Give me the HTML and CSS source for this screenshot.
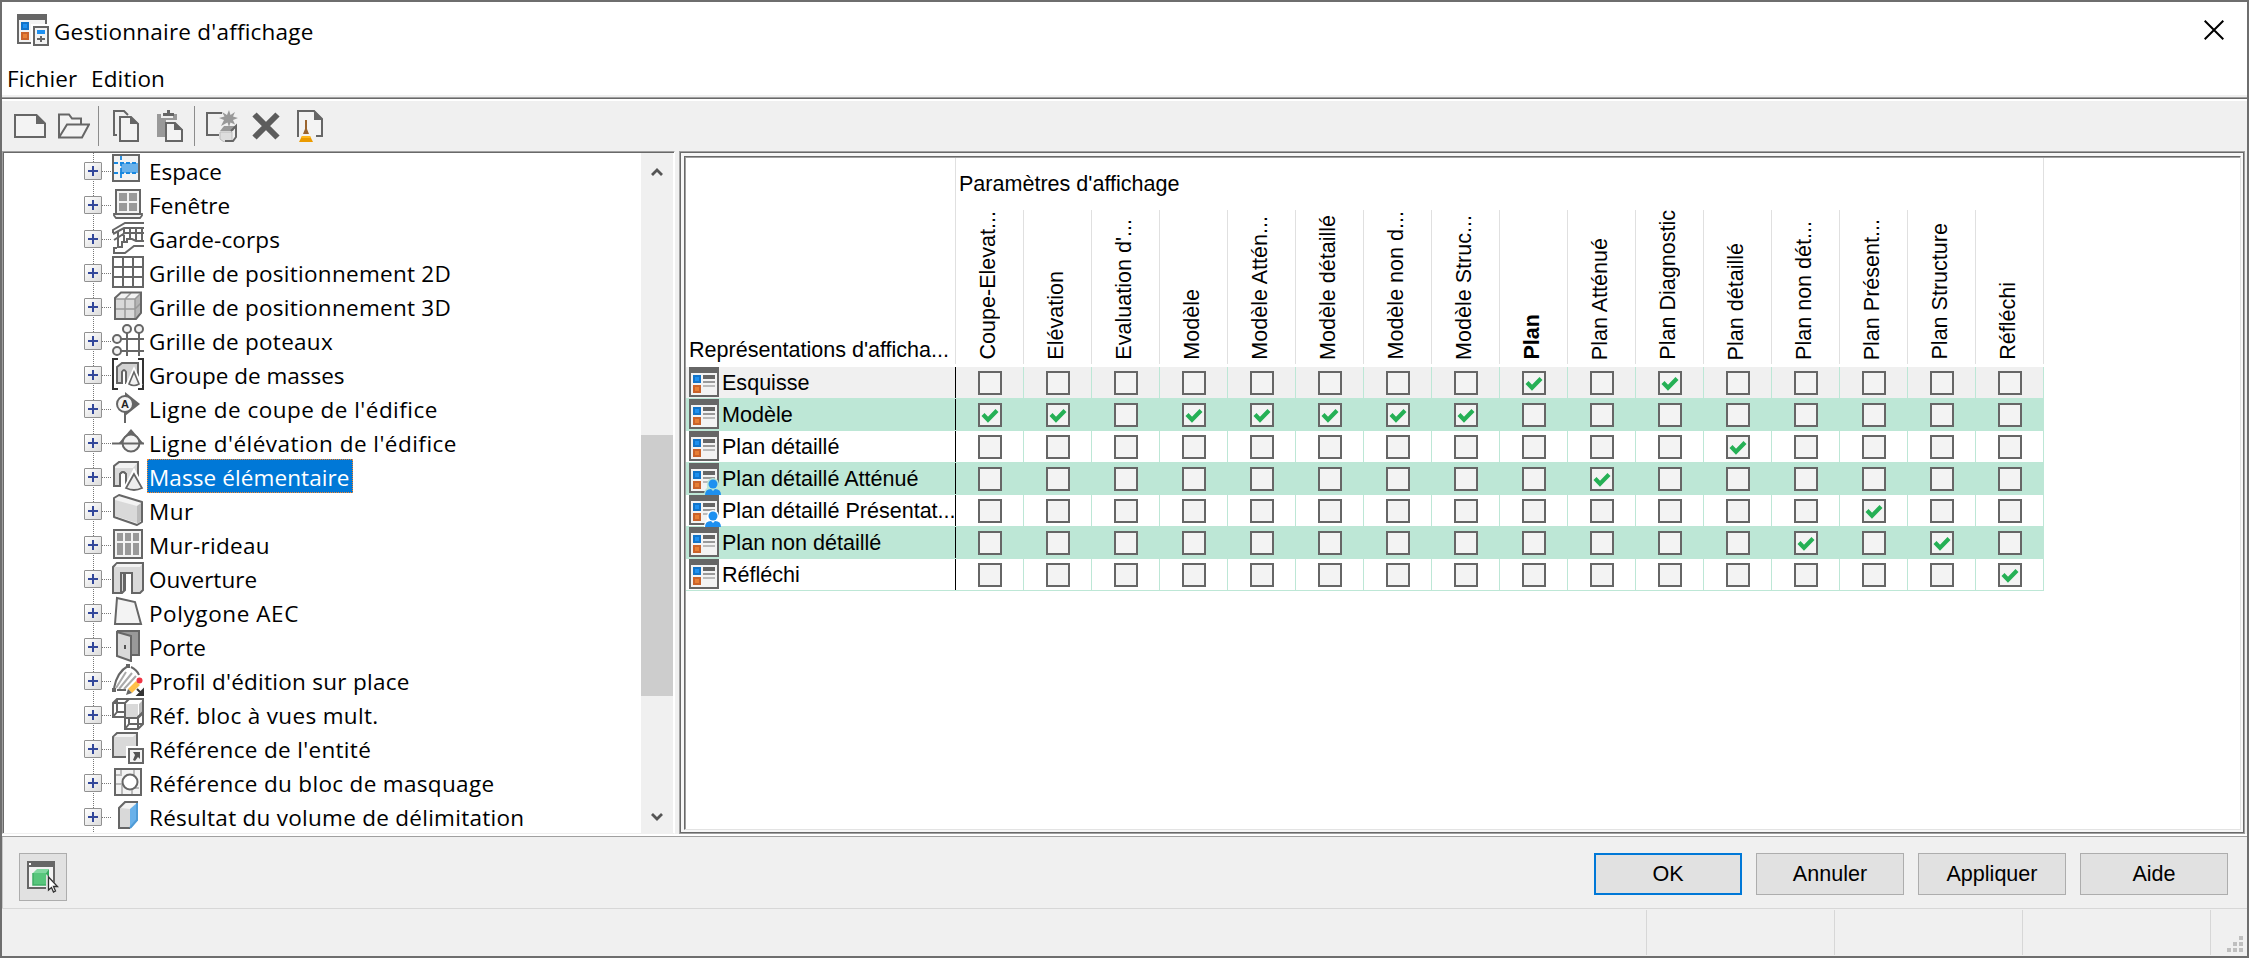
FILE: index.html
```html
<!DOCTYPE html>
<html lang="fr">
<head>
<meta charset="utf-8">
<title>Gestionnaire d'affichage</title>
<link rel="stylesheet" href="styles.css">
</head>
<body>
<div class="window">
  <header class="titlebar">
    <svg class="ico" viewBox="0 0 32 32"><rect x="1" y="1" width="28" height="28" fill="#f3f3f3" stroke="#666" stroke-width="2"/><path d="M0 0h30v6H0z" fill="#666"/><path d="M4 8h8v8H4z" fill="#1173c8"/><path d="M6 10h4v4H6z" fill="#1e90f0"/><path d="M4 18h8v8H4z" fill="#c9622a"/><path d="M6 20h4v4H6z" fill="#e87f35"/><path d="M14 10h18v22H14z" fill="#fff"/><rect x="17" y="13" width="14" height="18" fill="#f3f3f3" stroke="#666" stroke-width="2"/><path d="M20 16h8v4h-8z" fill="#1e90f0"/><path d="M20 25h8M24 22v6" stroke="#666" stroke-width="2"/></svg>
    <span class="ui title-text">Gestionnaire d'affichage</span>
    <svg class="close" viewBox="0 0 20 20"><path d="M.7.7l18.600 18.600M19.300.7L.7 19.300" stroke="#000" stroke-width="2" fill="none"/></svg>
  </header>
  <nav class="menubar ui"><span class="m1">Fichier</span><span class="m2">Edition</span></nav>
  <div class="toolbar">
    <svg class="ico" viewBox="0 0 32 32"><path d="M1 5h21.500l8.500 8.500V27H1z" fill="#f3f3f3" stroke="#666" stroke-width="2"/><path d="M22 4v10h10z" fill="#666"/></svg>
    <svg class="ico" viewBox="0 0 32 32"><path d="M1 27.500V4.500h10l3 4h9v6M1 27.500l8-13h22l-7 13z" fill="#f3f3f3" stroke="#666" stroke-width="2"/></svg>
    <i class="sep"></i>
    <svg class="ico" viewBox="0 0 32 32"><path d="M7 25H4V1h10l4 4" fill="none" stroke="#666" stroke-width="2"/><path d="M10 7h11l7 7v17H10z" fill="#f3f3f3" stroke="#666" stroke-width="2"/><path d="M20 6v8h9z" fill="#666"/></svg>
    <svg class="ico" viewBox="0 0 32 32"><path d="M3 4h4v4h12V4h4v6H12v17H3z" fill="#999"/><path d="M10 3h3V0h3v3h4v3H9V3z" fill="#666"/><path d="M12 13h9l7 7v11H12z" fill="#f3f3f3" stroke="#666" stroke-width="2"/><path d="M20 12v8h9z" fill="#666"/></svg>
    <i class="sep"></i>
    <svg class="ico" viewBox="0 0 32 32"><path d="M16 3H1v22h12" fill="none" stroke="#666" stroke-width="2"/><path d="M23 0l1.500 5L29 2l-2 4.500 5 1.500-5 2 2 4.500-4.500-2L23 17l-1.500-4.500L15 16l3-6-5-2 5.500-1.500L16 2l5 3z" fill="#999"/><path d="M14 22h12v10H18l-4-3z" fill="#ddd" stroke="#bbb"/><path d="M14 21l4-5h12l-3 5z" fill="#999"/><path d="M25 21l5-5v11l-3 4h-8" fill="none" stroke="#666" stroke-width="2"/></svg>
    <svg class="ico" viewBox="0 0 32 32"><path d="M4.500 4.500l23 23M27.500 4.500l-23 23" stroke="#5c5c5c" stroke-width="6"/></svg>
    <svg class="ico" viewBox="0 0 32 32"><path d="M4 27V1h16l8 8v17h-6" fill="#f3f3f3" stroke="#666" stroke-width="2"/><path d="M20 0v10h9z" fill="#666"/><path d="M11 10h2v9l2 5H9l2-5z" fill="#9a642e"/><path d="M8 26h8l3 6H5z" fill="#eb9b00"/><path d="M8 26h8l1 2H7z" fill="#ffb81c"/></svg>
  </div>
  <main class="main">
    <section class="tree">
      <ul class="items ui">
        <li><b class="plus"></b><svg class="ico" viewBox="0 0 32 32"><rect x="1" y="1" width="26" height="26" fill="#f3f3f3" stroke="#666" stroke-width="2"/><path d="M9 9h17v10H9z" fill="#69b1ea"/><path d="M9 2v24M2 9h24M2 19h24" fill="none" stroke="#1787e0" stroke-width="1.800" stroke-dasharray="4 2"/></svg><span>Espace</span></li>
        <li><b class="plus"></b><svg class="ico" viewBox="0 0 32 32"><rect x="4" y="2" width="24" height="24" fill="#f3f3f3" stroke="#666" stroke-width="2"/><path d="M7 5h8v8H7zM17 5h8v8h-8zM7 15h8v8H7zM17 15h8v8h-8z" fill="#999"/><path d="M2 26h28v1.500L28 30H4l-2-2.500z" fill="#f3f3f3" stroke="#666" stroke-width="1.800"/></svg><span class="w1">Fenêtre</span></li>
        <li><b class="plus"></b><svg class="ico" viewBox="0 0 32 32"><g fill="none" stroke="#666" stroke-width="2"><path d="M1 11v-3L13 1h19M1 12l11-6h20M6 10v16M12 6v14M18 6v12M24 6v12M30 6v12M2 18l11-7h19M5 26H2v5h11l9-7h10M5 25h5v-5h5v-3h5l4 2h8"/></g></svg><span class="w1">Garde-corps</span></li>
        <li><b class="plus"></b><svg class="ico" viewBox="0 0 32 32"><path d="M1 1h30v30H1zM11 1v30M21 1v30M1 11h30M1 21h30" fill="#fff" stroke="#666" stroke-width="2"/></svg><span class="w2">Grille de positionnement 2D</span></li>
        <li><b class="plus"></b><svg class="ico" viewBox="0 0 32 32"><path d="M3 9l6-6h20l-6 6z" fill="#f3f3f3"/><path d="M3 9h20v20H3z" fill="#d9d9d9"/><path d="M23 9l6-6v20l-6 6z" fill="#b5b5b5"/><path d="M3 9h20v20M13 9v20M3 19h20l6-6M13 9l6-6M23 9l6-6" fill="none" stroke="#999" stroke-width="1.500"/><path d="M3 29V8l6-5.500h20V23l-5 6z" fill="none" stroke="#666" stroke-width="2"/></svg><span class="w2">Grille de positionnement 3D</span></li>
        <li><b class="plus"></b><svg class="ico" viewBox="0 0 32 32"><g fill="none" stroke="#666" stroke-width="2"><path d="M15 9v23M27 9v23M9 15h23M9 27h23"/><g fill="#f3f3f3"><circle cx="15" cy="5" r="4"/><circle cx="27" cy="5" r="4"/><circle cx="5" cy="15" r="4"/><circle cx="5" cy="27" r="4"/></g></g></svg><span class="w2">Grille de poteaux</span></li>
        <li><b class="plus"></b><svg class="ico" viewBox="0 0 32 32"><path d="M6 1H1v30h5M26 1h5v30h-5" fill="none" stroke="#333" stroke-width="2"/><path d="M5 25V9l5-4h16v13l-8 7h-4V14q-2-4-4 0v11z" fill="#d2d2d2" stroke="#666" stroke-width="2"/><path d="M22 13l-6 13q6 4 12 0z" fill="#f3f3f3" stroke="#fff" stroke-width="4"/><path d="M22 14l-5 12q5 3 10 0z" fill="#f3f3f3" stroke="#666" stroke-width="1.600"/></svg><span>Groupe de masses</span></li>
        <li><b class="plus"></b><svg class="ico" viewBox="0 0 32 32"><path d="M13 0l15 12-15 12z" fill="#666"/><path d="M13 18v13" stroke="#666" stroke-width="2"/><circle cx="13" cy="12" r="8" fill="#f3f3f3" stroke="#666" stroke-width="2"/><text x="13" y="16" text-anchor="middle" class="glyph">A</text></svg><span class="w4">Ligne de coupe de l'édifice</span></li>
        <li><b class="plus"></b><svg class="ico" viewBox="0 0 32 32"><path d="M19 3l13 15H6z" fill="#666"/><circle cx="19" cy="17" r="8.500" fill="#f3f3f3" stroke="#666" stroke-width="2"/><path d="M0 17.500h32" stroke="#666" stroke-width="2"/></svg><span class="w4">Ligne d'élévation de l'édifice</span></li>
        <li><b class="plus"></b><svg class="ico" viewBox="0 0 32 32"><path d="M2 26V6l5-4h19v16l-8 8h-4V14q-3-4-6 0v12z" fill="#d9d9d9" stroke="#666" stroke-width="2"/><path d="M3 7l5-4h17l-4 5H3z" fill="#f3f3f3"/><path d="M8 26V14q3-4 6 0v4" fill="none" stroke="#666" stroke-width="1.600"/><path d="M22 12l-9 17q9 5 18 0z" fill="#f3f3f3" stroke="#fff" stroke-width="4"/><path d="M22 14l-8 14q8 4 16 0z" fill="#eee" stroke="#666" stroke-width="1.800"/></svg><span class="selected">Masse élémentaire</span></li>
        <li><b class="plus"></b><svg class="ico" viewBox="0 0 32 32"><path d="M2 19V4l5-3 23 7v20l-5 3L2 23z" fill="#f3f3f3" stroke="#666" stroke-width="2" stroke-linejoin="round"/><path d="M3 6l22 6v17L3 22z" fill="#d9d9d9"/><path d="M25 12l4-3v18l-4 3z" fill="#bbb"/></svg><span class="w4">Mur</span></li>
        <li><b class="plus"></b><svg class="ico" viewBox="0 0 32 32"><rect x="2" y="2" width="28" height="28" fill="#f3f3f3" stroke="#666" stroke-width="2"/><path d="M5 5h6v8H5zM13 5h6v8h-6zM21 5h6v8h-6zM5 15h6v12H5zM13 15h6v12h-6zM21 15h6v12h-6z" fill="#999"/></svg><span class="w2">Mur-rideau</span></li>
        <li><b class="plus"></b><svg class="ico" viewBox="0 0 32 32"><path d="M1 31V5l4-4h26v27l-3 3h-8V11h-7v17l-3 3z" fill="#d9d9d9" stroke="#666" stroke-width="2"/><path d="M3 5h25l2-3H5z" fill="#f3f3f3"/><path d="M9 31V11h4M12 11v18M20 11v-1" fill="none" stroke="#666" stroke-width="2"/></svg><span>Ouverture</span></li>
        <li><b class="plus"></b><svg class="ico" viewBox="0 0 32 32"><path d="M5 2l18 4 6 22H3z" fill="#f3f3f3" stroke="#666" stroke-width="2"/></svg><span class="w5">Polygone AEC</span></li>
        <li><b class="plus"></b><svg class="ico" viewBox="0 0 32 32"><path d="M5 1h22v24H14" fill="#999" stroke="#666" stroke-width="2"/><path d="M5 2l14 4v25L5 26z" fill="#d9d9d9" stroke="#666" stroke-width="2"/><path d="M12 15h2v4h-2z" fill="#555"/></svg><span>Porte</span></li>
        <li><b class="plus"></b><svg class="ico" viewBox="0 0 32 32"><path d="M4 24L14 8M7 25L20 9M12 25L24 12" stroke="#aaa" stroke-width="2"/><path d="M2 24Q5 8 16 2M19 3q6 3 8 8M5 26h9" fill="none" stroke="#666" stroke-width="2"/><path d="M14 0h4v4h-4zM0 24h4v4H0z" fill="#666"/><path d="M16 25l8-8 4 4-8 8z" fill="#ffc04a"/><path d="M14 31l2-6 4 4z" fill="#666"/><circle cx="27.500" cy="16.500" r="3" fill="#f03444"/><path d="M25 25l5 5M31 26v5h-5z" stroke="#333" stroke-width="2" fill="#333"/></svg><span class="w2">Profil d'édition sur place</span></li>
        <li><b class="plus"></b><svg class="ico" viewBox="0 0 32 32"><g fill="none" stroke="#666" stroke-width="2"><path d="M1 5l4-4h12l-4 4zM1 5v14h12M5 1v13h8M1 19l4-5M13 5l4-4h14v14l-5 5H13z"/><path d="M14 6h12v13H14z" fill="#d9d9d9" stroke="none"/><path d="M27 6l3-3v12l-3 3z" fill="#bbb" stroke="none"/><path d="M13 19v12h13l5-5V14l-5 5v12M17 19v7h14M13 31l4-5"/></g></svg><span class="w3">Réf. bloc à vues mult.</span></li>
        <li><b class="plus"></b><svg class="ico" viewBox="0 0 32 32"><path d="M1 25V5l4-4h20v20l-4 4z" fill="#d9d9d9" stroke="#666" stroke-width="2"/><path d="M2 5l4-3h18l-3 3z" fill="#f3f3f3"/><path d="M14 14h18v18H14z" fill="#fff"/><rect x="17" y="17" width="14" height="14" fill="#f3f3f3" stroke="#666" stroke-width="2"/><path d="M21 20h7v7l-2-2-3 4-2-1 2-5z" fill="#555"/></svg><span class="w3">Référence de l'entité</span></li>
        <li><b class="plus"></b><svg class="ico" viewBox="0 0 32 32"><rect x="3" y="3" width="26" height="26" fill="#f3f3f3" stroke="#666" stroke-width="2"/><path d="M9 4v5H4M22 4v5M4 18h6v10M20 28v-5M27 22h-5" fill="none" stroke="#bbb" stroke-width="2"/><circle cx="18" cy="16" r="7.500" fill="#fff" stroke="#666" stroke-width="2"/></svg><span class="w3">Référence du bloc de masquage</span></li>
        <li><b class="plus"></b><svg class="ico" viewBox="0 0 32 32"><path d="M8 8l6-6h11l-7 7v19H8z" fill="#d9d9d9"/><path d="M9 8l5-5h10l-6 6z" fill="#f3f3f3"/><path d="M18 9l8-7v18l-7 8h-1z" fill="#69b1ea"/><path d="M18 28H7V8l6-6h13" fill="none" stroke="#666" stroke-width="2"/><path d="M25 3v17l-7 8" fill="none" stroke="#4f9bd6" stroke-width="2"/></svg><span class="w2">Résultat du volume de délimitation</span></li>
      </ul>
      <div class="scrollbar">
        <svg class="arrow" viewBox="0 0 12 10"><path d="M1 8l5-5 5 5" fill="none" stroke="#555" stroke-width="2.800"/></svg>
        <i class="thumb"></i>
        <svg class="arrow down" viewBox="0 0 12 10"><path d="M1 2l5 5 5-5" fill="none" stroke="#555" stroke-width="2.800"/></svg>
      </div>
    </section>
    <section class="panel">
      <div class="panel-inner">
        <div class="grid-head">
          <div class="corner">Représentations d'afficha...</div>
          <div class="params">
            <div class="params-title">Paramètres d'affichage</div>
            <div class="cols" id="cols"></div>
          </div>
        </div>
        <div id="rows"></div>
      </div>
    </section>
  </main>
  <footer class="actions">
    <div class="toolbtn"><svg class="ico" viewBox="0 0 32 32"><path d="M1 1h26v26H1z" fill="#f3f3f3" stroke="#666" stroke-width="2"/><path d="M0 0h28v6H0z" fill="#666"/><path d="M2 2h2v2H2z" fill="#fff"/><path d="M6 12h13v12H6z" fill="#58c67c"/><path d="M6 12l4-4h12l-3 4z" fill="#82d8a0"/><path d="M19 12l3-4v12l-3 4" fill="#36a95e"/><path d="M6 12v12h13" fill="none" stroke="#3fae66" stroke-width="1.500"/><path d="M19 13l13 13v6H19z" fill="#e1e1e1"/><path d="M21.500 16v13l3-2.500 2 4.500 2-1-2-4.500h4z" fill="#fff" stroke="#333" stroke-width="1.300"/></svg></div>
    <div class="buttons"><div class="btn ok">OK</div><div class="btn">Annuler</div><div class="btn">Appliquer</div><div class="btn">Aide</div></div>
  </footer>
  <div class="status"><i></i><i></i><i></i><i></i>
    <svg class="grip" viewBox="0 0 16 16"><path d="M12 0h4v4h-4zM6 6h4v4H6zM12 6h4v4h-4zM0 12h4v4H0zM6 12h4v4H6zM12 12h4v4h-4z" fill="#bfbfbf"/></svg>
  </div>
</div>
<script src="app.js"></script>
</body>
</html>
```
FILE: styles.css
```css
* { box-sizing: border-box; }
body { margin: 0; font: 21.55px/26px "Liberation Sans", Arial, sans-serif; color: #000; }
.window { width: 2249px; height: 958px; border: 2px solid #6e6e6e; background: #f0f0f0; display: flex; flex-direction: column; overflow: hidden; }
.ui { font-family: "Open Sans", "Segoe UI", sans-serif; font-size: 22.5px; white-space: nowrap; }
.ico { width: 32px; height: 32px; flex: none; display: block; }
.titlebar { height: 60px; background: #fff; display: flex; align-items: flex-start; padding: 12px 23px 0 15px; }
.title-text { margin: 5px 0 0 5px; flex: 1; letter-spacing: .22px; }
.close { width: 20px; height: 20px; margin-top: 6px; }
.menubar { height: 33px; background: #fff; padding: 4px 0 0 5px; display: flex; letter-spacing: .15px; }
.m1 { width: 84px; }
.toolbar { height: 56px; border-top: 2px solid #f0f0f0; box-shadow: inset 0 1px #a0a0a0, inset 0 2px #696969, inset 0 4px #fff; padding: 13px 0 0 12px; display: flex; gap: 12px; flex: none; }
.sep { width: 1px; height: 40px; background: #8c8c8c; margin: -4px -1px 0 -4px; }
.main { height: 683px; display: flex; gap: 4px; flex: none; }
.tree { width: 673px; display: flex; border: 1px solid #a0a0a0; border-right-color: #fff; border-bottom-color: #f0f0f0; box-shadow: inset 1px 1px #696969; padding: 1px 1px 0 1px; background: #fff; }
.items { list-style: none; margin: 0; padding: 0; width: 637px; overflow: hidden; }
.items li { height: 34px; display: flex; padding-left: 80px; background: repeating-linear-gradient(#777 0 1px, transparent 1px 2px) 89px 0 / 1px 100% no-repeat, repeating-linear-gradient(90deg, #777 0 1px, transparent 1px 2px) 98px 18px / 10px 1px no-repeat; }
.items .ico { margin: 1px 3px 0 10px; }
.items span { height: 34px; line-height: 36px; padding: 0 2px 0 1px; border: 1px solid transparent; }
.items .selected { background: #0078d7; color: #fff; border: 1px dotted #ff8728; letter-spacing: .1px; }
.items .w1 { letter-spacing: .12px; }
.items .w2 { letter-spacing: .27px; }
.items .w3 { letter-spacing: .33px; }
.items .w4 { letter-spacing: .47px; }
.items .w5 { letter-spacing: .58px; }
.plus { width: 18px; height: 18px; margin-top: 9px; border: 1px solid #919191; border-radius: 1px; background: linear-gradient(#32479a, #32479a) 3px 7px / 10px 2px no-repeat, linear-gradient(#32479a, #32479a) 7px 3px / 2px 10px no-repeat, linear-gradient(135deg, #fff, #dcdcdc); }
.glyph { font: bold 11px "Liberation Sans", sans-serif; fill: #222; }
.scrollbar { width: 32px; background: #f0f0f0; display: flex; flex-direction: column; align-items: center; }
.arrow { width: 12px; height: 10px; margin-top: 14px; }
.thumb { width: 32px; height: 261px; background: #cdcdcd; margin-top: 258px; }
.down { margin-top: 116px; }
.panel { width: 1566px; border: 1px solid #a0a0a0; box-shadow: inset 0 0 0 1px #696969; background: #f7f7f7; padding: 4px 3px 3px 4px; }
.panel-inner { height: 100%; background: #fff; border-top: 1px solid #696969; border-left: 1px solid #696969; border-right: 1px solid #e3e3e3; border-bottom: 1px solid #e3e3e3; box-shadow: inset 1px 1px #a0a0a0; padding: 1px; }
.grid-head { display: flex; height: 209px; }
.corner { width: 270px; height: 206px; padding: 179px 0 0 3px; border-right: 1px solid #e0e0e0; white-space: nowrap; }
.params { width: 1088px; height: 206px; border-right: 1px solid #e0e0e0; }
.params-title { height: 52px; padding: 13px 0 0 3px; }
.cols { height: 154px; display: flex; }
.col { width: 68px; flex: none; border-right: 1px solid #e0e0e0; display: flex; align-items: flex-end; padding: 0 0 4px 19px; white-space: nowrap; }
.col:last-child { width: 67px; border: 0; }
.col span { writing-mode: vertical-rl; transform: rotate(180deg); line-height: 26px; }
.col.current { font-weight: bold; }
.row { width: 1358px; height: 32px; display: flex; border-bottom: 1px solid #bde7d6; background: #fff; }
.row.green { background: #bde7d6; }
.row.active { background: #f0f0f0; }
.name { width: 270px; height: 31px; border-right: 1px solid #000; padding-left: 3px; display: flex; gap: 3px; line-height: 32px; white-space: nowrap; }
.name .rep { width: 32px; height: 32px; margin-right: -2px; flex: none; }
.cell { width: 68px; height: 31px; padding: 4px 0 0 22px; border-right: 1px solid #bde7d6; }
.box { width: 24px; height: 24px; border: 2px solid #666; background: #f3f3f3; }
.box svg { display: block; width: 20px; height: 20px; }
.actions { height: 75px; flex: none; border-top: 2px solid #fff; box-shadow: inset 0 1px #a0a0a0, inset 1px 0 #c8c8c8; border-bottom: 1px solid #d7d7d7; padding: 17px 19px 0 17px; display: flex; justify-content: space-between; }
.toolbtn { width: 48px; height: 48px; border: 1px solid #adadad; background: #e1e1e1; padding: 7px; }
.buttons { display: flex; gap: 14px; }
.btn { width: 148px; height: 42px; border: 1px solid #adadad; background: #e1e1e1; text-align: center; line-height: 40px; }
.btn.ok { border: 2px solid #0078d7; line-height: 38px; }
.status { flex: 1; display: flex; padding: 1px 4px 1px 1457px; }
.status i { width: 188px; border-left: 1px solid #d7d7d7; flex: none; }
.status i:first-child { margin-left: 187px; }
.status i:nth-child(4) { width: 17px; }
.grip { width: 16px; height: 16px; flex: none; margin-top: 26px; }
```
FILE: app.js
```js
const columns = ["Coupe-Elevat...", "Elévation", "Evaluation d'...", "Modèle", "Modèle Attén...", "Modèle détaillé", "Modèle non d...", "Modèle Struc...", "Plan", "Plan Atténué", "Plan Diagnostic", "Plan détaillé", "Plan non dét...", "Plan Présent...", "Plan Structure", "Réfléchi"];
const rows = [
  { name: "Esquisse", style: "active", on: [8, 10] },
  { name: "Modèle", style: "green", on: [0, 1, 3, 4, 5, 6, 7] },
  { name: "Plan détaillé", style: "", on: [11] },
  { name: "Plan détaillé Atténué", style: "green", user: true, on: [9] },
  { name: "Plan détaillé Présentat...", style: "", user: true, on: [13] },
  { name: "Plan non détaillé", style: "green", on: [12, 14] },
  { name: "Réfléchi", style: "", on: [15] }
];
const check = '<svg viewBox="0 0 20 20"><path d="M3 9.500l5 5.200L17 5.600" fill="none" stroke="#25b055" stroke-width="4.200"/></svg>';
function icon(r) {
  const halo = r.style === "green" ? "#bde7d6" : "#fff";
  const user = r.user ? `<path d="M15 32q0-5 3-7-1-10 6-10t6 10q2 2 2 7z" fill="${halo}"/><circle cx="24" cy="21" r="4.500" fill="#1e90f0"/><path d="M16 32q0-6 6-6l2 2 2-2q6 0 6 6z" fill="#1e90f0"/>` : "";
  return `<svg class="rep" viewBox="0 0 32 32"><rect x="1" y="1" width="28" height="28" fill="#f3f3f3" stroke="#666" stroke-width="2"/><path d="M0 0h30v6H0zM14 8h12v4H14z" fill="#666"/><path d="M14 14h12v2H14z" fill="#999"/><path d="M14 18h12v2H14z" fill="#bbb"/><path d="M4 8h8v8H4z" fill="#1173c8"/><path d="M6 10h4v4H6z" fill="#1e90f0"/><path d="M4 18h8v8H4z" fill="#c9622a"/><path d="M6 20h4v4H6z" fill="#e87f35"/>${user}</svg>`;
}
document.getElementById("cols").innerHTML = columns.map((c, i) => `<div class="col${i === 8 ? " current" : ""}"><span>${c}</span></div>`).join("");
document.getElementById("rows").innerHTML = rows.map(r => `<div class="row ${r.style}"><div class="name">${icon(r)}<span>${r.name}</span></div>${columns.map((c, i) => `<div class="cell"><div class="box">${r.on.includes(i) ? check : ""}</div></div>`).join("")}</div>`).join("");
```
